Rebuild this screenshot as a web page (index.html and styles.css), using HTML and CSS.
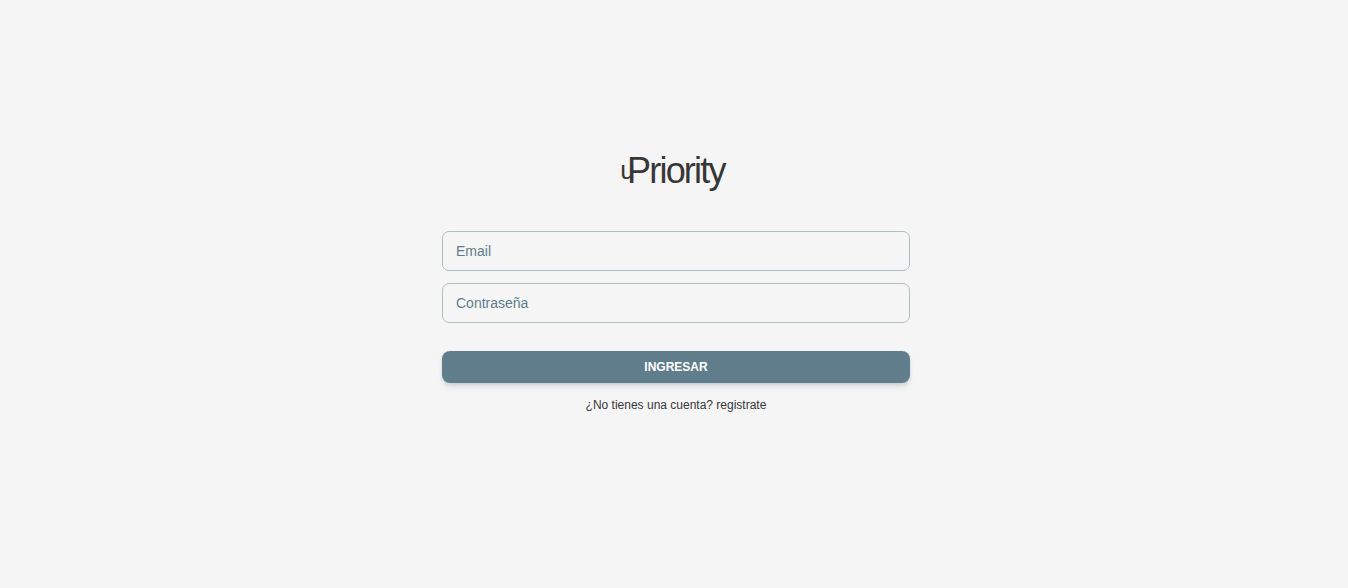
FILE: index.html
```html
<!DOCTYPE html>
<html lang="es">
<head>
<meta charset="utf-8">
<meta name="viewport" content="width=device-width, initial-scale=1">
<title>uPriority</title>
<link rel="stylesheet" href="styles.css">
</head>
<body>
<main class="login">
  <h1 class="brand"><span class="brand-prefix">u</span>Priority</h1>
  <form class="form">
    <input class="field" type="email" placeholder="Email" aria-label="Email">
    <input class="field" type="password" placeholder="Contraseña" aria-label="Contraseña">
    <button class="submit" type="submit">INGRESAR</button>
  </form>
  <p class="signup">¿No tienes una cuenta? <a class="signup-link" href="#">registrate</a></p>
</main>
</body>
</html>
```

FILE: styles.css
```css
* { box-sizing: border-box; }
body {
  margin: 0;
  min-height: 100vh;
  display: flex;
  align-items: center;
  justify-content: center;
  background: #f5f5f5;
  color: #373737;
  font-family: "Liberation Sans", Arial, sans-serif;
}
.login {
  width: 100%;
  max-width: 468px;
  margin-left: 4px;
  padding-bottom: 28px;
}
.brand {
  margin: 0 0 36px;
  padding-right: 7px;
  display: flex;
  justify-content: center;
  align-items: center;
  font-size: 36px;
  line-height: 48px;
  font-weight: 400;
  letter-spacing: -0.05em;
}
.brand-prefix {
  margin-right: -6px;
  padding-bottom: 2px;
  font-size: 26px;
  line-height: 32px;
}
.form { display: flex; flex-direction: column; gap: 12px; }
.field {
  width: 100%;
  height: 40px;
  padding: 0 13px;
  border: 1px solid #b0bec5;
  border-radius: 7px;
  background: transparent;
  color: #607d8b;
  font: 14px "Liberation Sans", Arial, sans-serif;
}
.field::placeholder { color: #607d8b; opacity: 1; }
.submit {
  height: 32px;
  margin-top: 16px;
  border: 0;
  border-radius: 8px;
  background: #607d8b;
  color: #fff;
  font: bold 12px "Liberation Sans", Arial, sans-serif;
  box-shadow: 0 4px 6px -1px rgba(96, 125, 139, 0.2), 0 2px 4px -1px rgba(96, 125, 139, 0.2);
}
.signup { margin: 14px 0 0; font-size: 12px; line-height: 16px; text-align: center; }
.signup-link { color: inherit; text-decoration: none; }
```
